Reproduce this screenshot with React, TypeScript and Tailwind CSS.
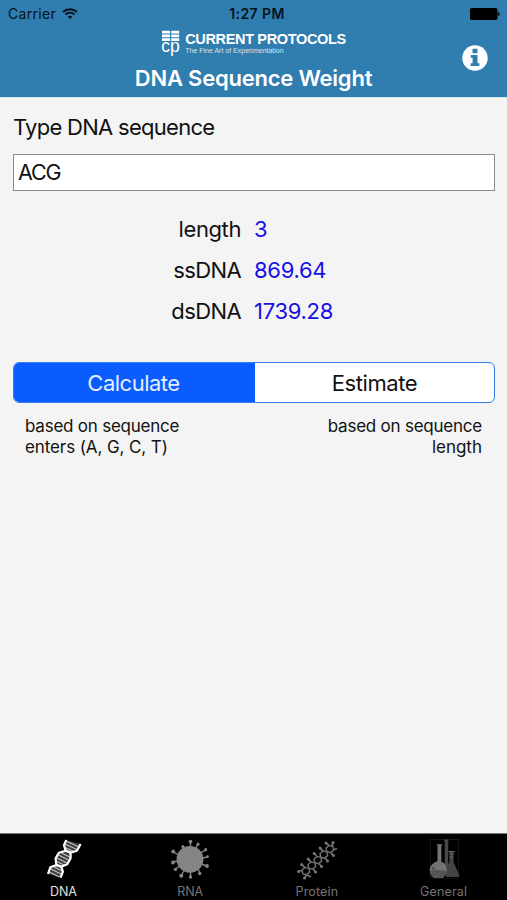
import { useState } from 'react';

const results = [
  { label: 'length', value: '3', labelClass: 'tracking-[-0.4px]' },
  { label: 'ssDNA', value: '869.64', labelClass: 'tracking-[-0.6px]' },
  { label: 'dsDNA', value: '1739.28', labelClass: 'tracking-[-0.6px]' },
];

function WifiIcon() {
  return (
    <svg width="16" height="12" viewBox="0 0 16 12" fill="none" stroke="#06121b" strokeWidth="2">
      <path d="M1 4C5 .2 11 .2 15 4" />
      <path d="M3.6 6.6C6.2 4.2 9.8 4.2 12.4 6.6" />
      <path d="M5.7 8.6C7 7.4 9 7.4 10.3 8.6L8 11z" fill="#06121b" stroke="none" />
    </svg>
  );
}

function BatteryIcon() {
  return (
    <svg width="30" height="12" viewBox="0 0 30 12">
      <rect width="27.5" height="12" rx="1.8" />
      <path d="M28.2 4c2 .3 2 3.7 0 4z" />
    </svg>
  );
}

function InfoIcon() {
  return (
    <svg width="26" height="26" viewBox="0 0 26 26">
      <circle cx="13" cy="13" r="12.7" fill="#fff" />
      <path d="M10.5 3.7h5v4.500h-5zM8.700 10h6.800v8.200h1.900V21H8.700v-2.800h1.900v-5.400H8.700z" fill="#307db0" />
    </svg>
  );
}

function LogoIcon() {
  return (
    <svg width="20" height="27" viewBox="0 0 20 27" fill="#fff">
      <path d="M1 .8h8v2.700H1zM10.200 .8h8v2.700h-8zM1 4.500h8v2.700H1zM10.200 4.500h8v2.700h-8zM1 8.200h8v2.700H1zM10.200 8.200h8v2.700h-8z" />
      <text
        x="0.200"
        y="21.500"
        fontSize="18.500"
        fontFamily="Liberation Sans, sans-serif"
        textLength="18.600"
        lengthAdjust="spacingAndGlyphs"
      >
        cp
      </text>
    </svg>
  );
}

function DnaIcon() {
  return (
    <svg width="40" height="42" viewBox="0 0 40 42" fill="none" stroke="#fff">
      <path
        d="M23.3 2L21 7.200l1.600 5.500 5 2 6.300-2L37.600 6zM15.900 14.700l6.700-2 5 2v5.600l-3.300 6-6 2.400-5-1.700-.7-6.700zM7.300 29.300l6-2.300 5 1.700 1.600 5-2.300 6L5 36z"
        fill="#3d3d3d"
        stroke="none"
      />
      <path
        d="M22 6l12 5.500M22 9.500l9 4M24 3.500l11 5M15.500 17l11 5.500M14 20l11 5.500M14 23.500l8 4M18.500 15l9 4.500M8 31l11 5.500M6.500 34l10 5M11 29l8 4"
        stroke="#c4c4c4"
        strokeWidth="1.300"
      />
      <path
        d="M23.3 2L21 7.200l1.600 5.500-6.700 2-3.300 5.600.7 6.700-6 2.300L5 36"
        strokeWidth="2.200"
        strokeLinejoin="round"
      />
      <path
        d="M37.600 6l-3.700 6.700-6.300 2v5.600l-3.300 6-6 2.400 1.600 5-2.300 6"
        strokeWidth="2.200"
        strokeLinejoin="round"
      />
      <path d="M22.600 12.700l5 2M13.300 27l5 1.700" strokeWidth="2.400" />
    </svg>
  );
}

function RnaIcon() {
  return (
    <svg width="40" height="42" viewBox="0 0 40 42" fill="#858585" stroke="#858585">
      <circle cx="20" cy="21.3" r="13.4" stroke="none" />
      <path
        d="M20.500 9V4M26 10l2-4M30.500 15l5-3M32.500 20l5-1M31.500 26l5 2M28 31l2 4M20.500 34v5M14.500 32l-3 5M9.500 28l-4 3M7.500 23l-5 1M8.500 17l-5-3M13.500 11l-1-3"
        strokeWidth="1.4"
      />
      <g stroke="none">
        <circle cx="20.5" cy="3.6" r="1.9" />
        <circle cx="28" cy="6.2" r="1.6" />
        <circle cx="35.6" cy="11.7" r="1.6" />
        <circle cx="37.5" cy="18.6" r="1.4" />
        <circle cx="37" cy="28" r="1.9" />
        <circle cx="29.7" cy="35.5" r="1.7" />
        <circle cx="20.5" cy="39" r="1.7" />
        <circle cx="11.3" cy="37.8" r="2" />
        <circle cx="5.4" cy="31.4" r="1.7" />
        <circle cx="3" cy="24.5" r="1.9" />
        <circle cx="3.2" cy="13.5" r="1.9" />
        <circle cx="13" cy="8.7" r="1.6" />
      </g>
    </svg>
  );
}

function ProteinIcon() {
  return (
    <svg width="40" height="42" viewBox="0 -1.5 40 42" fill="none" stroke="#6e6e6e" strokeWidth="1.5">
      <path d="M5 30.5l3-2.5 3.8.8.8 3.9-3 2.5-3.7-.8zM11 25l3-2.5 3.8.8.8 3.9-3 2.5-3.8-.9zM17 19.5l3-2.5 3.8.8.8 3.9-3 2.5-3.8-.9zM23 14l3-2.5 3.8.8.8 3.9-3 2.5-3.8-.9zM29 8.5l3-2.5 3.8.8.8 3.9-3 2.5-3.8-.9z" />
      <path
        d="M8 28l-3.5-3M14 22.5l-3-3M20 17l-2.7-3M26 11.5L23 8.5M32 6l-3-2.5M35 7l1-4M37 10l3-1M34 13.5l2.5 2.5M28 18.5l2.5 3M22 24l2.5 3M16 29.5l2.5 3M9.5 35.5l-2 3M5 31l-4 1M10 35.5l4 2"
        strokeWidth="1.8"
      />
      <g fill="#777" stroke="none">
        <circle cx="4.7" cy="25" r="1.5" />
        <circle cx="11.2" cy="19.6" r="1.5" />
        <circle cx="17.2" cy="14" r="1.5" />
        <circle cx="23" cy="8.5" r="1.5" />
        <circle cx="29" cy="3.5" r="1.5" />
        <circle cx="36" cy="3" r="1.5" />
        <circle cx="1.7" cy="32" r="1.5" />
        <circle cx="7.5" cy="38.5" r="1.5" />
        <circle cx="18.5" cy="32.5" r="1.5" />
        <circle cx="24.5" cy="27" r="1.5" />
        <circle cx="30.5" cy="21.5" r="1.5" />
        <circle cx="36.5" cy="16" r="1.5" />
      </g>
    </svg>
  );
}

function FlaskIcon() {
  return (
    <svg width="40" height="42" viewBox="0 0 40 42">
      <rect x="6.5" y="1.5" width="28" height="39" fill="none" stroke="#151515" />
      <path d="M19.5 1.5H25l-.8 2v28h-3.5v-28z" fill="#484848" />
      <path
        d="M24.5 13h6l-1 2v9l5.5 12.5c.5 2-.5 2.500-2 2.500H22l-1-8 4.500-7v-9z"
        fill="#444"
      />
      <path d="M24.5 13.5h6M25.5 16h4M25.5 19h4" stroke="#686868" />
      <path
        d="M12.700 6.300h5.600l-.9 2v15.500c3.500 1 5.300 4.700 5.300 8.200 0 3-1.400 6-4.400 8h-8c-3-2-4.500-5-4.500-8 0-4 3.500-7.500 7.700-8.700v-15z"
        fill="#747474"
      />
      <path d="M5.800 33c4-1.500 13-1 17 0-.3 3-1.500 5.500-4.500 7h-8c-3-1.500-4.300-4-4.500-7z" fill="#555" />
      <circle cx="9.500" cy="30.500" r="1.300" fill="#444" />
    </svg>
  );
}

const tabs = [
  { name: 'DNA', icon: <DnaIcon />, textClass: 'tracking-[-0.1px]' },
  { name: 'RNA', icon: <RnaIcon />, textClass: 'tracking-[-0.1px]' },
  { name: 'Protein', icon: <ProteinIcon />, textClass: 'tracking-[0.15px]' },
  { name: 'General', icon: <FlaskIcon />, textClass: 'tracking-[0.15px]' },
];

export default function App() {
  const [sequence, setSequence] = useState('ACG');
  const [activeTab, setActiveTab] = useState('DNA');

  return (
    <div className="flex h-[900px] w-[507px] flex-col overflow-hidden bg-[#f4f4f4] font-[Inter,sans-serif] text-[#111]">
      <header className="flex h-[97px] shrink-0 flex-col bg-[#307db0] shadow-[0_1px_0_#d5e5ef]">
        <div className="grid h-[27px] grid-cols-[1fr_auto_1fr] items-center pr-[7px] pl-2 text-[#06121b]">
          <div className="flex items-center gap-1.5 text-[14px] tracking-[0.3px]">
            <span>Carrier</span>
            <WifiIcon />
          </div>
          <p className="pl-1.5 text-center text-[14px] font-semibold tracking-[0.4px]">1:27 PM</p>
          <div className="flex justify-end">
            <BatteryIcon />
          </div>
        </div>
        <div className="grid flex-1 grid-cols-[60px_1fr_60px] text-white">
          <div />
          <div className="flex flex-col items-center">
            <div className="flex h-[28px] items-start gap-1 pt-[3px]">
              <LogoIcon />
              <div className="font-['Liberation_Sans',sans-serif]">
                <p className="text-[14.5px] leading-[18px] font-bold tracking-[-0.35px]">
                  CURRENT PROTOCOLS
                </p>
                <p className="text-[7px] leading-[5px] text-[#d3e6f2]">
                  The Fine Art of Experimentation
                </p>
              </div>
            </div>
            <h1 className="pt-[9px] text-[22px] leading-[28px] font-semibold tracking-[-0.22px]">
              DNA Sequence Weight
            </h1>
          </div>
          <button className="flex justify-center pt-[18px] pr-[5px]">
            <InfoIcon />
          </button>
        </div>
      </header>

      <main className="flex-1 pt-[15px] pr-3 pl-[13px]">
        <label
          className="block h-[42px] text-[22px] leading-[30px] tracking-[-0.72px]"
          htmlFor="sequence"
        >
          Type DNA sequence
        </label>
        <input
          id="sequence"
          className="block h-[37px] w-full border border-[#8c8c8c] bg-white px-1 pb-0.5 text-[21.5px] tracking-[-1.2px] outline-none"
          value={sequence}
          onChange={(e) => setSequence(e.target.value)}
        />
        <div className="mt-[18px] flex flex-col text-[22px]">
          {results.map((item) => (
            <div key={item.label} className="flex h-[41px] items-center gap-[13px]">
              <span className={`w-[228px] text-right ${item.labelClass}`}>{item.label}</span>
              <span className="tracking-[-0.3px] text-[#1710e6]">{item.value}</span>
            </div>
          ))}
        </div>

        <div className="mt-[30px] flex h-[41px] overflow-hidden rounded-[6px] border border-[#387eea] bg-white text-[22px]">
          <button className="w-[241px] bg-[#0a5cff] pt-0.5 pr-0.5 tracking-[-0.5px] text-[#e3edff]">
            Calculate
          </button>
          <button className="flex-1 pt-0.5 tracking-[-0.4px]">Estimate</button>
        </div>
        <div className="flex justify-between pr-[13px] pl-3 pt-[13px] text-[17px] leading-[21px] tracking-[-0.23px]">
          <p>
            based on sequence
            <br />
            <span className="tracking-[-0.1px]">enters (A, G, C, T)</span>
          </p>
          <p className="text-right">
            based on sequence
            <br />
            <span className="tracking-[0px]">length</span>
          </p>
        </div>
      </main>

      <nav className="grid h-[67px] shrink-0 grid-cols-4 border-t border-[#777] bg-black">
        {tabs.map((tab) => (
          <button
            key={tab.name}
            onClick={() => setActiveTab(tab.name)}
            className={`flex flex-col items-center pt-1 text-[12.5px] leading-[16px] ${
              activeTab === tab.name ? 'text-[#e0e0e0]' : 'text-[#747474]'
            }`}
          >
            {tab.icon}
            <span className={`pt-1 ${tab.textClass}`}>{tab.name}</span>
          </button>
        ))}
      </nav>
    </div>
  );
}
